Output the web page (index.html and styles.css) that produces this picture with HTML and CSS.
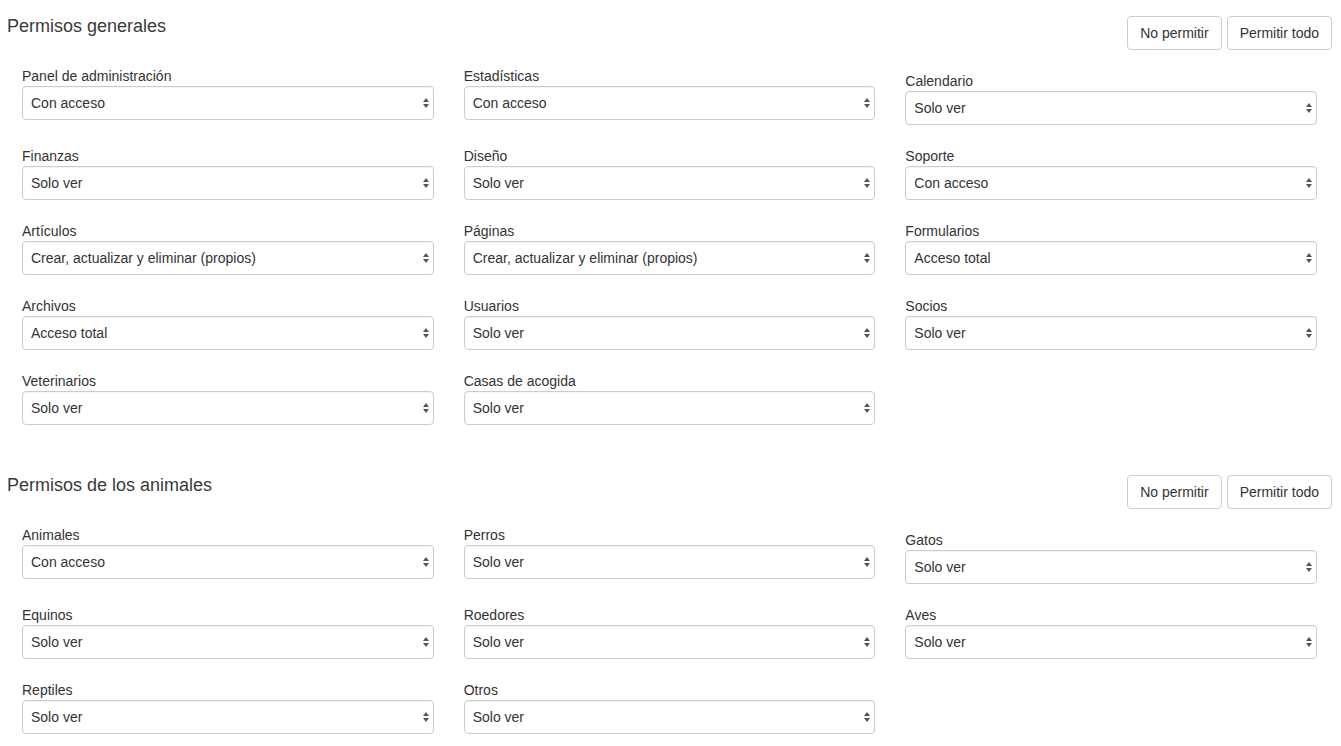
FILE: index.html
```html
<!DOCTYPE html>
<html lang="es">
<head>
<meta charset="utf-8">
<title>Permisos</title>
<link rel="stylesheet" href="styles.css">
</head>
<body>
<div class="page">
  <section class="section first">
    <div class="section-head">
      <h4 class="section-title">Permisos generales</h4>
      <div class="btns">
        <button class="btn">No permitir</button>
        <button class="btn">Permitir todo</button>
      </div>
    </div>
    <div class="grid">
      <div class="group"><label>Panel de administración</label><div class="sel"><select><option>Con acceso</option></select><svg class="arr" width="8" height="12" viewBox="0 0 8 12"><path d="M4 1L7 5H1Z M4 11L7 7H1Z" fill="#555"/></svg></div></div>
      <div class="group"><label>Estadísticas</label><div class="sel"><select><option>Con acceso</option></select><svg class="arr" width="8" height="12" viewBox="0 0 8 12"><path d="M4 1L7 5H1Z M4 11L7 7H1Z" fill="#555"/></svg></div></div>
      <div class="group shift"><label>Calendario</label><div class="sel"><select><option>Solo ver</option></select><svg class="arr" width="8" height="12" viewBox="0 0 8 12"><path d="M4 1L7 5H1Z M4 11L7 7H1Z" fill="#555"/></svg></div></div>

      <div class="group"><label>Finanzas</label><div class="sel"><select><option>Solo ver</option></select><svg class="arr" width="8" height="12" viewBox="0 0 8 12"><path d="M4 1L7 5H1Z M4 11L7 7H1Z" fill="#555"/></svg></div></div>
      <div class="group"><label>Diseño</label><div class="sel"><select><option>Solo ver</option></select><svg class="arr" width="8" height="12" viewBox="0 0 8 12"><path d="M4 1L7 5H1Z M4 11L7 7H1Z" fill="#555"/></svg></div></div>
      <div class="group"><label>Soporte</label><div class="sel"><select><option>Con acceso</option></select><svg class="arr" width="8" height="12" viewBox="0 0 8 12"><path d="M4 1L7 5H1Z M4 11L7 7H1Z" fill="#555"/></svg></div></div>

      <div class="group"><label>Artículos</label><div class="sel"><select><option>Crear, actualizar y eliminar (propios)</option></select><svg class="arr" width="8" height="12" viewBox="0 0 8 12"><path d="M4 1L7 5H1Z M4 11L7 7H1Z" fill="#555"/></svg></div></div>
      <div class="group"><label>Páginas</label><div class="sel"><select><option>Crear, actualizar y eliminar (propios)</option></select><svg class="arr" width="8" height="12" viewBox="0 0 8 12"><path d="M4 1L7 5H1Z M4 11L7 7H1Z" fill="#555"/></svg></div></div>
      <div class="group"><label>Formularios</label><div class="sel"><select><option>Acceso total</option></select><svg class="arr" width="8" height="12" viewBox="0 0 8 12"><path d="M4 1L7 5H1Z M4 11L7 7H1Z" fill="#555"/></svg></div></div>

      <div class="group"><label>Archivos</label><div class="sel"><select><option>Acceso total</option></select><svg class="arr" width="8" height="12" viewBox="0 0 8 12"><path d="M4 1L7 5H1Z M4 11L7 7H1Z" fill="#555"/></svg></div></div>
      <div class="group"><label>Usuarios</label><div class="sel"><select><option>Solo ver</option></select><svg class="arr" width="8" height="12" viewBox="0 0 8 12"><path d="M4 1L7 5H1Z M4 11L7 7H1Z" fill="#555"/></svg></div></div>
      <div class="group"><label>Socios</label><div class="sel"><select><option>Solo ver</option></select><svg class="arr" width="8" height="12" viewBox="0 0 8 12"><path d="M4 1L7 5H1Z M4 11L7 7H1Z" fill="#555"/></svg></div></div>

      <div class="group"><label>Veterinarios</label><div class="sel"><select><option>Solo ver</option></select><svg class="arr" width="8" height="12" viewBox="0 0 8 12"><path d="M4 1L7 5H1Z M4 11L7 7H1Z" fill="#555"/></svg></div></div>
      <div class="group"><label>Casas de acogida</label><div class="sel"><select><option>Solo ver</option></select><svg class="arr" width="8" height="12" viewBox="0 0 8 12"><path d="M4 1L7 5H1Z M4 11L7 7H1Z" fill="#555"/></svg></div></div>
    </div>
  </section>

  <section class="section second">
    <div class="section-head">
      <h4 class="section-title">Permisos de los animales</h4>
      <div class="btns">
        <button class="btn">No permitir</button>
        <button class="btn">Permitir todo</button>
      </div>
    </div>
    <div class="grid">
      <div class="group"><label>Animales</label><div class="sel"><select><option>Con acceso</option></select><svg class="arr" width="8" height="12" viewBox="0 0 8 12"><path d="M4 1L7 5H1Z M4 11L7 7H1Z" fill="#555"/></svg></div></div>
      <div class="group"><label>Perros</label><div class="sel"><select><option>Solo ver</option></select><svg class="arr" width="8" height="12" viewBox="0 0 8 12"><path d="M4 1L7 5H1Z M4 11L7 7H1Z" fill="#555"/></svg></div></div>
      <div class="group shift"><label>Gatos</label><div class="sel"><select><option>Solo ver</option></select><svg class="arr" width="8" height="12" viewBox="0 0 8 12"><path d="M4 1L7 5H1Z M4 11L7 7H1Z" fill="#555"/></svg></div></div>

      <div class="group"><label>Equinos</label><div class="sel"><select><option>Solo ver</option></select><svg class="arr" width="8" height="12" viewBox="0 0 8 12"><path d="M4 1L7 5H1Z M4 11L7 7H1Z" fill="#555"/></svg></div></div>
      <div class="group"><label>Roedores</label><div class="sel"><select><option>Solo ver</option></select><svg class="arr" width="8" height="12" viewBox="0 0 8 12"><path d="M4 1L7 5H1Z M4 11L7 7H1Z" fill="#555"/></svg></div></div>
      <div class="group"><label>Aves</label><div class="sel"><select><option>Solo ver</option></select><svg class="arr" width="8" height="12" viewBox="0 0 8 12"><path d="M4 1L7 5H1Z M4 11L7 7H1Z" fill="#555"/></svg></div></div>

      <div class="group"><label>Reptiles</label><div class="sel"><select><option>Solo ver</option></select><svg class="arr" width="8" height="12" viewBox="0 0 8 12"><path d="M4 1L7 5H1Z M4 11L7 7H1Z" fill="#555"/></svg></div></div>
      <div class="group"><label>Otros</label><div class="sel"><select><option>Solo ver</option></select><svg class="arr" width="8" height="12" viewBox="0 0 8 12"><path d="M4 1L7 5H1Z M4 11L7 7H1Z" fill="#555"/></svg></div></div>
    </div>
  </section>
</div>
</body>
</html>
```
FILE: styles.css
```css
* { box-sizing: border-box; }
html, body {
  margin: 0;
  padding: 0;
  background: #fff;
}
body {
  font-family: "Liberation Sans", Arial, Helvetica, sans-serif;
  font-size: 14px;
  color: #333;
}
.page {
  width: 1341px;
  padding: 0 9px 0 7px;
}
.section.second {
  margin-top: 13px;
}
.section-head {
  display: flex;
  justify-content: space-between;
  align-items: flex-start;
  padding-top: 15px;
}
.section-title {
  margin: 1px 0 0;
  font-size: 18px;
  line-height: 20px;
  font-weight: normal;
  color: #3a3a3a;
}
.btns {
  display: flex;
  gap: 5px;
  margin-top: 1px;
}
.btn {
  font-family: "Liberation Sans", Arial, Helvetica, sans-serif;
  font-size: 14px;
  color: #333;
  background: #fff;
  border: 1px solid #ccc;
  border-radius: 4px;
  height: 34px;
  padding: 0 12px;
  line-height: 20px;
  cursor: pointer;
}
.grid {
  display: grid;
  grid-template-columns: repeat(3, 1fr);
  column-gap: 30px;
  padding: 0 15px;
  margin-top: 16px;
  align-items: start;
}
.group {
  margin-bottom: 21px;
}
.group.shift {
  margin-top: 5px;
}
.group label {
  display: block;
  line-height: 20px;
  margin-bottom: 0;
  color: #333;
}
.sel {
  position: relative;
}
.sel select {
  display: block;
  width: 100%;
  height: 34px;
  appearance: none;
  -webkit-appearance: none;
  background: #fff;
  border: 1px solid #ccc;
  border-radius: 4px;
  padding: 0 24px 0 8px;
  font-family: "Liberation Sans", Arial, Helvetica, sans-serif;
  font-size: 14px;
  color: #333;
  box-shadow: inset 0 1px 1px rgba(0,0,0,0.04);
}
.sel .arr {
  position: absolute;
  right: 4px;
  top: 11px;
  pointer-events: none;
}
```
